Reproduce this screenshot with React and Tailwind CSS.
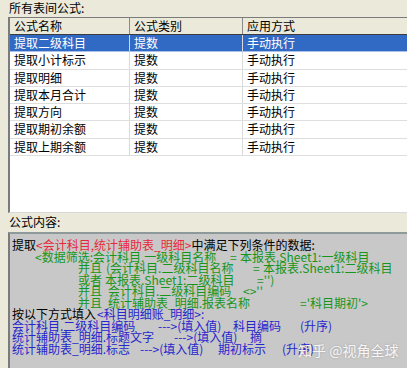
import React from "react";

const rows = [
  "提取二级科目",
  "提取小计标示",
  "提取明细",
  "提取本月合计",
  "提取方向",
  "提取期初余额",
  "提取上期余额",
];

const G = "text-[#17961c]";
const B = "text-[#2626cc]";
const R = "text-[#e8283a]";
const K = "text-black";

// each line: left indent + cells laid out in flow with fixed widths (tab stops)
const lines = [
  { pl: "pl-[2px]", cells: [["", K, "提取"], ["", R, "<会计科目,统计辅助表_明细>"], ["", K, "中满足下列条件的数据:"]] },
  { pl: "pl-[25px]", cells: [["w-[195px]", G, "<数据筛选:会计科目.一级科目名称"], ["w-[10px]", G, "="], ["", G, "本报表.Sheet1:一级科目"]] },
  { pl: "pl-[68px]", cells: [["w-[28px]", G, "并且"], ["w-[147px]", G, "(会计科目.二级科目名称"], ["w-[10px]", G, "="], ["", G, "本报表.Sheet1:二级科目"]] },
  { pl: "pl-[68px]", cells: [["w-[27px]", G, "或者"], ["w-[152px]", G, "本报表.Sheet1:二级科目"], ["", G, "='')"]] },
  { pl: "pl-[68px]", cells: [["w-[30px]", G, "并且"], ["w-[135px]", G, "会计科目.二级科目编码"], ["", G, "<>''"]] },
  { pl: "pl-[68px]", cells: [["w-[30px]", G, "并且"], ["w-[192px]", G, "统计辅助表_明细.报表名称"], ["", G, "='科目期初'>"]] },
  { pl: "pl-[2px]", cells: [["w-[85px]", K, "按以下方式填入"], ["", B, "<科目明细账_明细>:"]] },
  { pl: "pl-[2px]", cells: [["w-[146px]", B, "会计科目.二级科目编码"], ["w-[75px]", B, "--->(填入值)"], ["w-[67px]", B, "科目编码"], ["", B, "(升序)"]] },
  { pl: "pl-[2px]", cells: [["w-[162px]", B, "统计辅助表_明细.标题文字"], ["w-[76px]", B, "--->(填入值)"], ["", B, "摘"]] },
  { pl: "pl-[2px]", cells: [["w-[128px]", B, "统计辅助表_明细.标志"], ["w-[78px]", B, "--->(填入值)"], ["w-[64px]", B, "期初标示"], ["", B, "(升序)"]] },
];

export default function App() {
  return (
    <div
      className="relative w-[407px] h-[368px] overflow-hidden bg-[#ebe9d9] text-[12px] text-black"
      style={{ fontFamily: '"Noto Sans CJK SC", "Noto Sans", sans-serif' }}
    >
      <div className="pl-[9px] h-[17px] leading-[16px]">所有表间公式:</div>

      {/* formula list */}
      <div className="ml-[8px] h-[196px] bg-white border-l-2 border-t border-b border-l-[#7b7b7b] border-t-[#7b7b7b] border-b-[#d8d8d8]">
        <div className="flex h-[17px] bg-[#ebe9d9] border-b border-[#3c3c3c] leading-[16px]">
          <div className="w-[120px] pl-[4px] border-r border-[#8a8a8a]">公式名称</div>
          <div className="w-[113px] pl-[4px] border-r border-[#8a8a8a]">公式类别</div>
          <div className="flex-1 pl-[4px]">应用方式</div>
        </div>
        {rows.map((r, i) => (
          <div
            key={r}
            className={`flex h-[17.3px] leading-[16px] border-b ${
              i === 0 ? "bg-[#316ac5] text-white border-[#a9c0e8]" : "border-[#dedede]"
            }`}
          >
            <div className="w-[120px] pl-[4px] border-r border-[#dadada]">{r}</div>
            <div className="w-[113px] pl-[4px] border-r border-[#dadada]">提数</div>
            <div className="flex-1 pl-[4px]">手动执行</div>
          </div>
        ))}
      </div>

      <div className="pl-[9px] h-[19px] leading-[18px]">公式内容:</div>

      {/* formula content */}
      <div className="ml-[8px] h-[140px] bg-[#c8c8c8] border-l-2 border-t-2 border-l-[#7b7b7b] border-t-[#8e9a9a] pt-[5px]">
        {lines.map((ln, i) => (
          <div key={i} className={`flex h-[11.5px] leading-[11.5px] whitespace-pre ${ln.pl}`}>
            {ln.cells.map(([w, c, t], j) => (
              <span key={j} className={`shrink-0 ${w} ${c}`}>
                {t}
              </span>
            ))}
          </div>
        ))}
      </div>

      <div className="absolute left-[298px] top-[341px] text-[14px] leading-[18px] text-white/90 [text-shadow:0_0_2px_rgba(0,0,0,0.25)]">
        知乎 @视角全球
      </div>
    </div>
  );
}
